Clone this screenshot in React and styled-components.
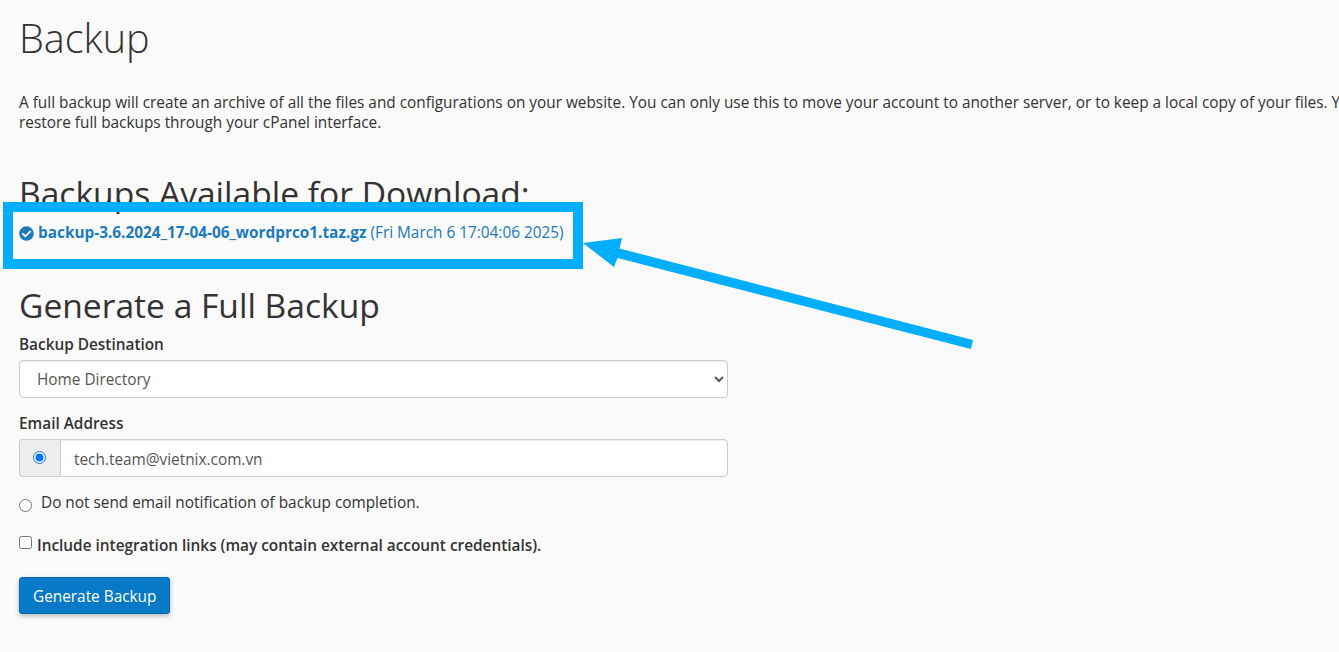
import React from 'react'
import styled, { createGlobalStyle } from 'styled-components'
import { FaCheckCircle } from 'react-icons/fa'

const GlobalStyle = createGlobalStyle`
  html, body {
    margin: 0;
    height: 100%;
    overflow: hidden;
    background: #fafafa;
  }
  body {
    font-family: "Open Sans", "Liberation Sans", sans-serif;
    font-size: 15.36px;
    line-height: 20px;
    color: #333;
  }
`

const Page = styled.div`
  position: relative;
  width: 1339px;
  height: 652px;
  overflow: hidden;
  padding: 12px 0 0 19px;
  box-sizing: border-box;
`

const Title = styled.h1`
  margin: 0 0 29px;
  font-size: 39.6px;
  line-height: 52px;
  font-weight: 300;
  color: #333;
`

const Intro = styled.p`
  margin: 0 0 40px;
  width: 1400px;
`

const SectionTitle = styled.h2`
  margin: 0;
  font-size: 33.6px;
  line-height: 40px;
  font-weight: 400;
  color: #333;
`

const BackupRow = styled.div`
  display: flex;
  align-items: center;
  gap: 4px;
  margin: 10px 0 42px;
  color: #2079bd;
`

const BackupName = styled.a`
  font-weight: 700;
  color: #1b7ac0;
`

const Form = styled.form`
  width: 709px;
  margin-top: 9px;
`

const Field = styled.div`
  margin-bottom: 15px;
`

const Label = styled.label`
  display: block;
  font-weight: 600;
  padding-top: 1px;
  margin-bottom: 5px;
`

const Select = styled.select`
  display: block;
  width: 100%;
  height: 38px;
  padding: 0 13px;
  font: inherit;
  color: #555;
  background: #fff;
  border: 1px solid #ccc;
  border-radius: 4px;
  box-shadow: inset 0 1px 1px rgba(0, 0, 0, 0.075);
`

const InputGroup = styled.div`
  display: flex;
  height: 38px;
`

const Addon = styled.span`
  display: flex;
  align-items: center;
  justify-content: center;
  width: 41px;
  box-sizing: border-box;
  background: #eee;
  border: 1px solid #ccc;
  border-right: 0;
  border-radius: 4px 0 0 4px;
`

const Input = styled.input`
  flex: 1;
  min-width: 0;
  padding: 4px 13px 0;
  font: inherit;
  color: #555;
  background: #fff;
  border: 1px solid #ccc;
  border-radius: 0 4px 4px 0;
  box-shadow: inset 0 1px 1px rgba(0, 0, 0, 0.075);
`

const Radio = styled.input`
  margin: 0 2px 2px 0;
  width: 13px;
  height: 13px;
`

const OptionRow = styled.label`
  display: flex;
  align-items: flex-start;
  gap: ${(p) => p.$gap}px;
  padding-top: 1px;
  margin-bottom: ${(p) => p.$below}px;
  font-weight: ${(p) => (p.$bold ? 600 : 400)};
`

const OptionMark = styled.input`
  margin: ${(p) => p.$top}px 0 0;
  width: 13px;
  height: 13px;
  flex: none;
`

const Submit = styled.button`
  display: block;
  height: 37px;
  padding: 2px 13px 0;
  font: inherit;
  color: #fff;
  background: #0679c8;
  border: 1px solid #0568ad;
  border-radius: 3px;
  box-shadow: 0 2px 5px rgba(0, 0, 0, 0.26);
`

const HighlightBox = styled.div`
  position: absolute;
  left: 3px;
  top: 202px;
  width: 580px;
  height: 67px;
  box-sizing: border-box;
  border: 10px solid #00aeff;
`

const Arrow = styled.svg`
  position: absolute;
  left: 0;
  top: 0;
  pointer-events: none;
`

export default function App() {
  return (
    <>
      <GlobalStyle />
      <Page>
        <Title>Backup</Title>
        <Intro>
          A full backup will create an archive of all the files and configurations on your website. You can only use this to move your account to another server, or to keep a local copy of your files. You
          <br />
          restore full backups through your cPanel interface.
        </Intro>

        <SectionTitle>Backups Available for Download:</SectionTitle>
        <BackupRow>
          <FaCheckCircle size={15} />
          <span>
            <BackupName>backup-3.6.2024_17-04-06_wordprco1.taz.gz</BackupName> (Fri March 6 17:04:06 2025)
          </span>
        </BackupRow>

        <SectionTitle>Generate a Full Backup</SectionTitle>
        <Form>
          <Field>
            <Label>Backup Destination</Label>
            <Select defaultValue="home">
              <option value="home">Home Directory</option>
            </Select>
          </Field>
          <Field>
            <Label>Email Address</Label>
            <InputGroup>
              <Addon>
                <Radio type="radio" name="notify" defaultChecked />
              </Addon>
              <Input defaultValue="tech.team@vietnix.com.vn" />
            </InputGroup>
          </Field>
          <OptionRow $gap={9} $below={22}>
            <OptionMark type="radio" name="notify" $top={6} />
            Do not send email notification of backup completion.
          </OptionRow>
          <OptionRow $gap={5} $bold $below={21}>
            <OptionMark type="checkbox" $top={0} />
            Include integration links (may contain external account credentials).
          </OptionRow>
          <Submit type="button">Generate Backup</Submit>
        </Form>

        <HighlightBox />
        <Arrow width="1339" height="652" viewBox="0 0 1339 652">
          <polygon fill="#00aeff" points="583,243 622,238 619.5,248.5 973,340 971,349 617.5,258 614,267" />
        </Arrow>
      </Page>
    </>
  )
}
